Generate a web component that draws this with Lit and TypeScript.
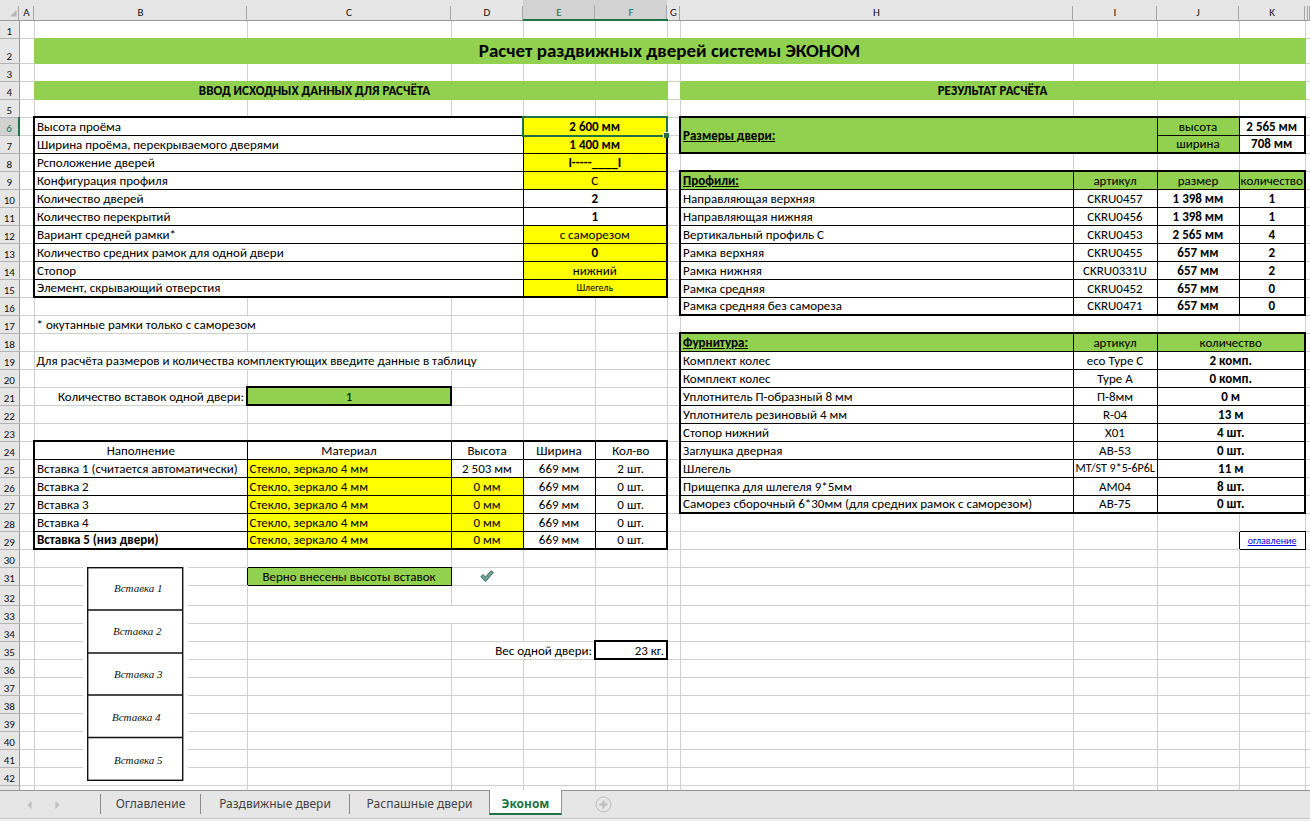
import { LitElement, html, css, svg, nothing } from "lit";
import { customElement, state } from "lit/decorators.js";
import { classMap } from "lit/directives/class-map.js";

type Line = "grid" | "thin" | "thick" | "green" | "none";

interface Cell {
  text?: unknown;
  cs?: number;
  rs?: number;
  cls?: string;
}

const COLS = "ABCDEFGHIJKL".split("");
const LAST_ROW = 43;
const [A, B, C, D, E, F, G, H, I, J, K, L] = COLS.map((_, i) => i);

const cells = new Map<string, Cell>();
const right: Line[][] = [];
const bottom: Line[][] = [];
for (let r = 0; r <= LAST_ROW; r++) {
  right.push(COLS.map(() => "grid"));
  bottom.push(COLS.map(() => "grid"));
  right[r][L] = "none";
}

const put = (r: number, c: number, text: unknown, cls = "", cs = 1, rs = 1) =>
  cells.set(`${r}:${c}`, { text, cls, cs, rs });

const outline = (r1: number, c1: number, r2: number, c2: number, line: Line) => {
  for (let r = r1; r <= r2; r++) {
    right[r][c1 - 1] = line;
    right[r][c2] = line;
  }
  for (let c = c1; c <= c2; c++) {
    bottom[r1 - 1][c] = line;
    bottom[r2][c] = line;
  }
};

const ruled = (r1: number, c1: number, r2: number, c2: number) => {
  for (let r = r1; r <= r2; r++)
    for (let c = c1; c <= c2; c++) {
      right[r][c] = "thin";
      bottom[r][c] = "thin";
    }
  outline(r1, c1, r2, c2, "thick");
};

// Headings
put(2, B, "Расчет раздвижных дверей системы ЭКОНОМ", "lime title", 10);
outline(2, B, 2, K, "green");
put(4, B, "ВВОД ИСХОДНЫХ ДАННЫХ ДЛЯ РАСЧЁТА", "lime mid bold", 4);
put(4, F, "", "lime");
outline(4, B, 4, F, "green");
right[4][E] = "green";
put(4, H, "РЕЗУЛЬТАТ РАСЧЁТА", "lime mid bold", 4);
outline(4, H, 4, K, "green");

// Input data
ruled(6, B, 15, F);
const inputs: [string, string, string][] = [
  ["Высота проёма", "2 600 мм", "yellow bold active"],
  ["Ширина проёма, перекрываемого дверями", "1 400 мм", "yellow bold"],
  ["Рсположение дверей", "I-----____I", "yellow bold"],
  ["Конфигурация профиля", "C", "yellow"],
  ["Количество дверей", "2", "bold"],
  ["Количество перекрытий", "1", "bold"],
  ["Вариант средней рамки*", "с саморезом", "yellow"],
  ["Количество средних рамок для одной двери", "0", "yellow bold"],
  ["Стопор", "нижний", "yellow"],
  ["Элемент, скрывающий отверстия", "Шлегель", "yellow small"],
];
inputs.forEach(([label, value, cls], i) => {
  put(6 + i, B, label, "", 3);
  put(6 + i, E, value, `mid ${cls}`, 2);
});

put(17, B, "* окутанные рамки только с саморезом", "", 2);
put(19, B, "Для расчёта размеров и количества комплектующих введите данные в таблицу", "", 3);
put(21, B, "Количество вставок одной двери:", "end");
put(21, C, "1", "lime mid");
outline(21, C, 21, C, "thick");

// Filling
ruled(24, B, 29, F);
["Наполнение", "Материал", "Высота", "Ширина", "Кол-во"].forEach((t, i) => put(24, B + i, t, "mid"));
const fills: [string, string, string][] = [
  ["Вставка 1 (считается автоматически)", "2 503 мм", "2 шт."],
  ["Вставка 2", "0 мм", "0 шт."],
  ["Вставка 3", "0 мм", "0 шт."],
  ["Вставка 4", "0 мм", "0 шт."],
  ["Вставка 5 (низ двери)", "0 мм", "0 шт."],
];
fills.forEach(([name, height, count], i) => {
  const r = 25 + i;
  put(r, B, name, i === 4 ? "bold" : "");
  put(r, C, "Стекло, зеркало 4 мм", "yellow");
  put(r, D, height, i ? "mid yellow" : "mid");
  put(r, E, "669 мм", "mid");
  put(r, F, count, "mid");
});

const panels = [
  { top: 1.5, x: 31, base: 26 },
  { top: 44, x: 30, base: 69 },
  { top: 87, x: 31, base: 112 },
  { top: 129, x: 29, base: 155 },
  { top: 171.5, x: 31, base: 198 },
];
const sketch = html`<svg class="sketch" width="105" height="217" viewBox="0 0 105 217" role="img" aria-label="Схема вставок двери">
  <rect width="105" height="217" fill="#fff"></rect>
  <rect x="4.7" y="1.7" width="95" height="212.6" fill="none" stroke="#111" stroke-width="1.4"></rect>
  ${panels.map(
    (p, i) => svg`${i ? svg`<path d=${`M4 ${p.top}H100`} stroke="#111" stroke-width="1.4"></path>` : nothing}
      <text x=${p.x} y=${p.base}>Вставка ${i + 1}</text>`
  )}
</svg>`;
put(31, B, sketch, "anchor");

put(31, C, "Верно внесены высоты вставок", "lime mid");
outline(31, C, 31, C, "thin");
put(
  31,
  D,
  html`<svg class="tick" width="14" height="12" viewBox="0 0 14 12" role="img" aria-label="Верно">
    <path d="M.8 6.6 3.2 4.6 5.6 7 11 .8 13.3 2.4 6 11.2H5.2Z" fill="#6aa593" stroke="#42705f" stroke-width="1" stroke-linejoin="round"></path>
  </svg>`,
  "mid"
);
right[33][C] = "none";
put(35, D, "Вес одной двери:", "end", 2);
put(35, F, "23 кг.", "end");
outline(35, F, 35, F, "thick");

// Door size
ruled(6, H, 7, K);
put(6, H, "Размеры двери:", "lime bold under", 2, 2);
put(6, J, "высота", "lime mid");
put(7, J, "ширина", "lime mid");
put(6, K, "2 565 мм", "mid bold");
put(7, K, "708 мм", "mid bold");

// Profiles
ruled(9, H, 16, K);
put(9, H, "Профили:", "lime bold under");
put(9, I, "артикул", "lime mid");
put(9, J, "размер", "lime mid");
put(9, K, "количество", "lime mid tight");
const profiles = [
  ["Направляющая верхняя", "CKRU0457", "1 398 мм", "1"],
  ["Направляющая нижняя", "CKRU0456", "1 398 мм", "1"],
  ["Вертикальный профиль C", "CKRU0453", "2 565 мм", "4"],
  ["Рамка верхняя", "CKRU0455", "657 мм", "2"],
  ["Рамка нижняя", "CKRU0331U", "657 мм", "2"],
  ["Рамка средняя", "CKRU0452", "657 мм", "0"],
  ["Рамка средняя без самореза", "CKRU0471", "657 мм", "0"],
];
profiles.forEach(([name, code, size, count], i) => {
  put(10 + i, H, name);
  put(10 + i, I, code, "mid");
  put(10 + i, J, size, "mid bold");
  put(10 + i, K, count, "mid bold");
});

// Fittings
ruled(18, H, 27, K);
put(18, H, "Фурнитура:", "lime bold under");
put(18, I, "артикул", "lime mid");
put(18, J, "количество", "lime mid", 2);
const fittings = [
  ["Комплект колес", "eco Type C", "2 комп."],
  ["Комплект колес", "Type A", "0 комп."],
  ["Уплотнитель П-образный 8 мм", "П-8мм", "0 м"],
  ["Уплотнитель резиновый 4 мм", "R-04", "13 м"],
  ["Стопор нижний", "X01", "4 шт."],
  ["Заглушка дверная", "AB-53", "0 шт."],
  ["Шлегель", "MT/ST 9*5-6P6L", "11 м"],
  ["Прищепка для шлегеля 9*5мм", "AM04", "8 шт."],
  ["Саморез сборочный 6*30мм (для средних рамок с саморезом)", "AB-75", "0 шт."],
];
fittings.forEach(([name, code, count], i) => {
  put(19 + i, H, name);
  put(19 + i, I, code, i === 6 ? "mid code" : "mid");
  put(19 + i, J, count, "mid bold", 2);
});
put(29, K, html`<a href="#contents">оглавление</a>`, "mid small");
outline(29, K, 29, K, "thin");

@customElement("app-root")
export class AppRoot extends LitElement {
  static styles = css`
    :host {
      display: flex;
      flex-direction: column;
      height: 100vh;
      overflow: hidden;
      background: #fff;
      color: #000;
      font-family: Carlito, Calibri, "Noto Sans", sans-serif;
      font-size: 13px;
    }
    .sheet {
      flex: 1;
      min-height: 0;
      overflow: hidden;
    }
    table {
      width: 100%;
      table-layout: fixed;
      border-collapse: collapse;
      line-height: 15px;
    }
    .c-row { width: 19px; }
    .c-A { width: 15px; }
    .c-B { width: 213px; }
    .c-C { width: 204px; }
    .c-D, .c-E, .c-F { width: 72px; }
    .c-G { width: 13px; }
    .c-I { width: 84px; }
    .c-J { width: 82px; }
    .c-K { width: 66px; }
    .c-L { width: 3px; }
    .c-end { width: 2px; }
    tr { height: 18px; }
    tr.head { height: 20px; }
    tr.r2 { height: 25px; }
    tr.r32 { height: 20px; }
    th {
      padding: 0;
      background-color: #e6e6e6;
      font-size: 11px;
      font-weight: 400;
      color: #111;
    }
    thead th {
      padding-top: 7px;
      line-height: 12px;
      border-bottom: 1px solid #999;
      background-image: linear-gradient(#a6a6a6, #a6a6a6);
      background-size: 1px 14px;
      background-position: right bottom;
      background-repeat: no-repeat;
    }
    thead th.on {
      background-color: #d2d2d2;
      border-bottom: 2px solid #217346;
    }
    th.on { color: #217346; }
    th.corner svg {
      display: block;
      margin-left: 10px;
    }
    tbody th {
      vertical-align: bottom;
      line-height: 13px;
      border-right: 1px solid #999;
      border-bottom: 1px solid #b4b4b4;
    }
    tbody th.on {
      background-color: #d2d2d2;
      border-right: 2px solid #217346;
    }
    td {
      padding: 0 2px;
      white-space: nowrap;
      vertical-align: middle;
    }
    .r-grid { border-right: 1px solid #d0d0d0; }
    .r-thin { border-right: 1px solid #000; }
    .r-thick { border-right: 2px solid #000; }
    .r-green { border-right: 1px solid #92d050; }
    .b-grid { border-bottom: 1px solid #d0d0d0; }
    .b-thin { border-bottom: 1px solid #000; }
    .b-thick { border-bottom: 2px solid #000; }
    .b-green { border-bottom: 1px solid #92d050; }
    .mid { text-align: center; }
    .end { text-align: right; }
    .bold { font-weight: 700; }
    .under { text-decoration: underline; }
    .small { font-size: 10px; }
    .code { font-size: 12px; }
    .tight { padding: 0; }
    .lime { background: #92d050; }
    .yellow { background: #ff0; }
    .title {
      font-size: 19px;
      line-height: 24px;
      font-weight: 700;
      text-align: center;
    }
    td a { color: #0000e0; }
    .tick {
      display: block;
      margin: 0 auto;
    }
    .active, .anchor { position: relative; }
    .frame {
      position: absolute;
      inset: -2px;
      border: 2px solid #217346;
      pointer-events: none;
    }
    .frame::after {
      content: "";
      position: absolute;
      right: -3px;
      bottom: -3px;
      width: 5px;
      height: 5px;
      background: #217346;
      border: solid #fff;
      border-width: 1px 0 0 1px;
    }
    .sketch {
      position: absolute;
      left: 48px;
      top: -2px;
      font: italic 11px "Liberation Serif", serif;
      fill: #111;
    }
    .bar {
      flex: none;
      display: flex;
      height: 27px;
      background: #e6e6e6;
      border-top: 1px solid #939393;
      border-bottom: 1px solid #c6c6c6;
      font-family: "Noto Sans", sans-serif;
      font-size: 12px;
    }
    .foot {
      flex: none;
      height: 2px;
      background: #f3f1ef;
    }
    button {
      appearance: none;
      margin: 0;
      padding: 0;
      border: 0;
      background: none;
      font: inherit;
      color: #444;
      cursor: pointer;
    }
    .nav {
      display: flex;
      align-items: center;
      width: 100px;
      padding-left: 15px;
      box-sizing: border-box;
    }
    .nav button {
      display: grid;
      place-items: center;
      width: 28px;
      height: 26px;
    }
    .tabs { display: flex; }
    .tab {
      box-sizing: border-box;
      height: 20px;
      margin-top: 3px;
      padding-bottom: 1px;
      border-left: 1px solid #8c8c8c;
    }
    .tab.current {
      height: 25px;
      margin-top: -1px;
      padding-top: 5px;
      background: #fff;
      border-right: 1px solid #939393;
      border-bottom: 2px solid #217346;
      color: #217346;
      font-weight: 700;
    }
    .add {
      display: grid;
      place-items: center;
      width: 18px;
      margin-left: 32px;
    }
  `;

  @state() private current = 3;

  private tabs = [
    { name: "Оглавление", width: 100 },
    { name: "Раздвижные двери", width: 149 },
    { name: "Распашные двери", width: 140 },
    { name: "Эконом", width: 73 },
  ];

  private row(r: number) {
    const out: unknown[] = [];
    for (let c = 0; c < COLS.length; c++) {
      if (r === 7 && (c === H || c === I)) continue;
      const cell = cells.get(`${r}:${c}`) ?? {};
      const cs = cell.cs ?? 1;
      const rs = cell.rs ?? 1;
      const end = c + cs - 1;
      const cls = `${cell.cls ?? ""} r-${right[r][end]} b-${bottom[r + rs - 1][c]}`;
      const active = cls.includes("active");
      out.push(html`<td class=${cls} colspan=${c === L ? 2 : cs} rowspan=${rs}>${cell.text ?? nothing}${active ? html`<span class="frame"></span>` : nothing}</td>`);
      c = end;
    }
    return html`<tr class="r${r}">
      <th scope="row" class=${classMap({ on: r === 6 })}>${r < LAST_ROW ? r : nothing}</th>
      ${out}
    </tr>`;
  }

  render() {
    return html`
      <div class="sheet">
        <table>
          <colgroup>
            <col class="c-row" />
            ${COLS.map((n) => html`<col class="c-${n}" />`)}
            <col class="c-end" />
          </colgroup>
          <thead>
            <tr class="head">
              <th class="corner">
                <svg width="7" height="7" viewBox="0 0 7 7" aria-hidden="true"><path d="M6.5 0V6.5H0Z" fill="#b5b5b5"></path></svg>
              </th>
              ${COLS.map((n) => html`<th scope="col" class=${classMap({ on: n === "E" || n === "F" })}>${n === "L" ? nothing : n}</th>`)}
              <th></th>
            </tr>
          </thead>
          <tbody>
            ${Array.from({ length: LAST_ROW }, (_, i) => this.row(i + 1))}
          </tbody>
        </table>
      </div>
      <nav class="bar" aria-label="Листы">
        <div class="nav">
          <button aria-label="Назад"><svg width="5" height="8" viewBox="0 0 5 8"><path d="M4.5 0V8L.5 4Z" fill="#bdbdbd"></path></svg></button>
          <button aria-label="Вперёд"><svg width="5" height="8" viewBox="0 0 5 8"><path d="M.5 0V8L4.5 4Z" fill="#bdbdbd"></path></svg></button>
        </div>
        <div class="tabs">
          ${this.tabs.map(
            (t, i) => html`<button
              class=${classMap({ tab: true, current: i === this.current })}
              style="width:${t.width}px"
              @click=${() => (this.current = i)}
            >${t.name}</button>`
          )}
        </div>
        <button class="add" aria-label="Новый лист">
          <svg width="17" height="17" viewBox="0 0 17 17" fill="none" stroke="#bcbcbc">
            <circle cx="8.5" cy="8.5" r="7.5"></circle>
            <path d="M8.5 4.5V12.5M4.5 8.5H12.5" stroke-width="2"></path>
          </svg>
        </button>
      </nav>
      <div class="foot"></div>
    `;
  }
}
